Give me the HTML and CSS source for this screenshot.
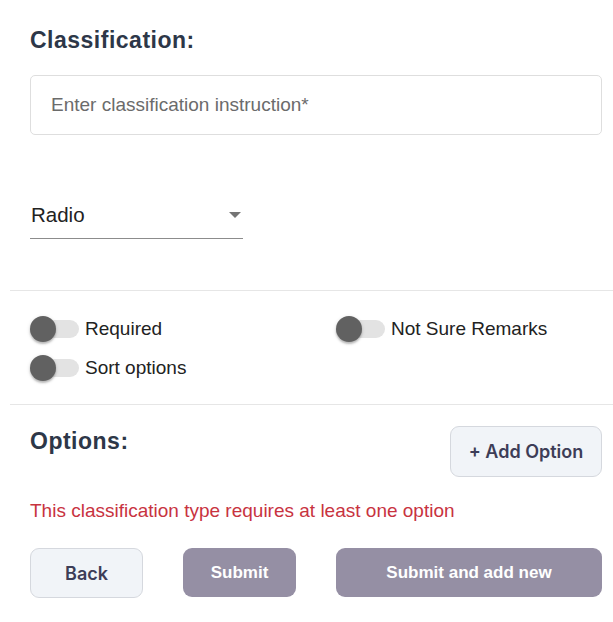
FILE: index.html
```html
<!DOCTYPE html>
<html lang="en">
<head>
<meta charset="utf-8">
<title>Classification</title>
<link rel="stylesheet" href="styles.css">
</head>
<body>
<main class="form">
  <h2 class="heading">Classification:</h2>
  <div class="input-box">
    <input class="text-input" type="text" placeholder="Enter classification instruction*">
  </div>
  <div class="select">
    <span class="select-value">Radio</span>
    <svg class="select-arrow" width="12" height="6" viewBox="0 0 12 6"><path d="M0 0h12L6 6z" fill="#757575"/></svg>
  </div>
  <hr class="divider first">
  <div class="toggles">
    <label class="toggle"><span class="switch"></span><span class="toggle-label">Required</span></label>
    <label class="toggle"><span class="switch"></span><span class="toggle-label">Not Sure Remarks</span></label>
    <label class="toggle"><span class="switch"></span><span class="toggle-label">Sort options</span></label>
  </div>
  <hr class="divider second">
  <div class="options-row">
    <h2 class="heading options-heading">Options:</h2>
    <button class="btn btn-light add-btn">+ Add Option</button>
  </div>
  <p class="error">This classification type requires at least one option</p>
  <div class="actions">
    <button class="btn btn-light back-btn">Back</button>
    <button class="btn btn-grey submit-btn">Submit</button>
    <button class="btn btn-grey submit-new-btn">Submit and add new</button>
  </div>
</main>
</body>
</html>
```

FILE: styles.css
```css
* { box-sizing: border-box; }

html, body {
  margin: 0;
  padding: 0;
  background: #ffffff;
}

body {
  font-family: "Liberation Sans", Arial, sans-serif;
  color: #222222;
}

.form {
  width: 613px;
  padding: 27px 11px 0 30px;
  display: flex;
  flex-direction: column;
}

.heading {
  margin: 0;
  font-size: 23px;
  line-height: 26px;
  font-weight: 700;
  letter-spacing: 0.5px;
  color: #2d3748;
}

.input-box {
  margin-top: 22px;
  height: 60px;
  border: 1px solid #dedede;
  border-radius: 5px;
  display: flex;
  align-items: center;
  padding: 0 20px;
}

.text-input {
  border: none;
  outline: none;
  width: 100%;
  font-family: "Liberation Sans", Arial, sans-serif;
  font-size: 19px;
  color: #222;
  background: transparent;
  padding: 0;
}

.text-input::placeholder {
  color: #6b6b6b;
}

.select {
  margin-top: 64px;
  width: 213px;
  height: 40px;
  padding: 0 2px 8px 1px;
  border-bottom: 1px solid #8c8c8c;
  display: flex;
  align-items: center;
  justify-content: space-between;
}

.select-value {
  font-size: 20.5px;
  line-height: 24px;
  color: #222;
}

.select-arrow {
  display: block;
  margin-top: 1px;
}

.divider {
  border: none;
  height: 1px;
  background: #e6e6e6;
  margin: 0 -11px 0 -20px;
}

.divider.first { margin-top: 51px; }

.toggles {
  margin-top: 18px;
  display: grid;
  grid-template-columns: 306px 1fr;
  grid-auto-rows: 39px;
}

.toggle {
  display: flex;
  align-items: center;
  gap: 6px;
}

.switch {
  position: relative;
  width: 47px;
  height: 18px;
  margin-left: 2px;
  border-radius: 9px;
  background: #e3e3e3;
}

.switch::before {
  content: "";
  position: absolute;
  left: -2px;
  top: -4px;
  width: 26px;
  height: 26px;
  border-radius: 50%;
  background: #616161;
  box-shadow: 0 2px 2px rgba(0, 0, 0, 0.22), 0 1px 4px rgba(0, 0, 0, 0.12);
}

.toggle-label {
  font-size: 19px;
  line-height: 22px;
  color: #222;
}

.divider.second { margin-top: 17px; }

.options-row {
  margin-top: 21px;
  display: flex;
  justify-content: space-between;
  align-items: flex-start;
}

.options-heading {
  margin-top: 2px;
}

.btn {
  border-radius: 9px;
  cursor: pointer;
  padding: 0;
}

.btn-light {
  background: #f1f4f8;
  border: 1px solid #d5d8de;
  color: #3d3d57;
  font-family: Inter, "Liberation Sans", sans-serif;
  font-weight: 600;
  font-size: 18px;
}

.add-btn {
  width: 152px;
  height: 51px;
}

.error {
  margin: 23px 0 0;
  font-size: 19px;
  line-height: 22px;
  color: #c8333f;
}

.actions {
  margin-top: 26px;
  display: flex;
  gap: 40px;
}

.back-btn {
  width: 113px;
  height: 50px;
}

.btn-grey {
  background: #958fa4;
  border: none;
  color: #ffffff;
  font-family: "Liberation Sans", Arial, sans-serif;
  font-weight: 700;
  font-size: 17px;
  height: 49px;
}

.submit-btn { width: 113px; }

.submit-new-btn { width: 266px; }
```
